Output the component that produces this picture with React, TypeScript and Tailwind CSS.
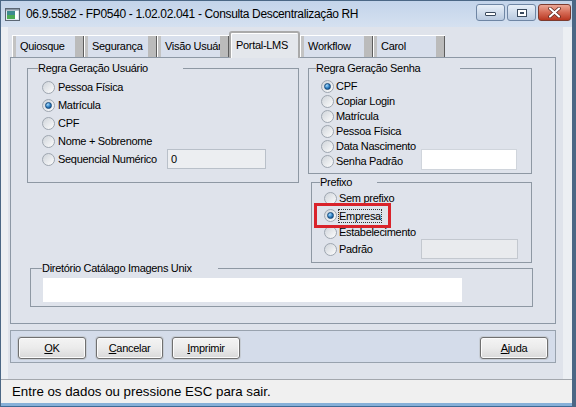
import React from 'react';

const Radio = ({ checked }: { checked?: boolean }) => (
  <span className="w-[13px] h-[13px] shrink-0 rounded-full border border-[#9ea6b0] bg-linear-to-br from-[#cfd4da] to-[#fdfdfd] flex items-center justify-center">
    {checked && (
      <span className="w-[7px] h-[7px] rounded-full border border-[#174a7c] bg-[radial-gradient(circle_at_35%_30%,#a8dcff,#2a7cc0_55%,#0c3d6e)]" />
    )}
  </span>
);

const Row = ({
  label,
  checked,
  h,
  gap,
  children,
}: {
  label: string;
  checked?: boolean;
  h: string;
  gap: string;
  children?: React.ReactNode;
}) => (
  <div className={`flex items-center ${h} ${gap}`}>
    <Radio checked={checked} />
    {children ?? <span>{label}</span>}
  </div>
);

const Tab = ({ label, w }: { label: string; w: string }) => (
  <div className={`${w} h-[22px] flex border-t border-white`}>
    <span className="w-[1px] bg-white" />
    <span className="w-[3px] bg-[#c3c3c3]" />
    <span className="flex-1 min-w-0 overflow-hidden whitespace-nowrap bg-[#d8dfec] pl-[4px] flex items-center">{label}</span>
    <span className="w-[8px] bg-[#bbbbbb]" />
    <span className="w-[1px] bg-[#5c5c5c]" />
  </div>
);

const Button = ({ mn, rest, w }: { mn: string; rest: string; w: string }) => (
  <button
    type="button"
    className={`${w} h-[22px] rounded-[3px] border border-[#707070] bg-linear-to-b from-[#f4f4f4] via-[#ebebeb] to-[#d9d9d9] shadow-[0_0_0_1px_#c6ccd4,inset_0_0_0_1px_#fbfbfb] flex items-center justify-center font-normal`}
  >
    <span>
      <span className="underline">{mn}</span>
      {rest}
    </span>
  </button>
);

export default function App() {
  return (
    <div className="w-[576px] h-[407px] flex flex-col overflow-hidden border-t border-l border-r-[4px] border-[#4b6785] bg-[#eceff3] font-['Liberation_Sans',Arial,sans-serif] text-[11px] tracking-[-0.3px] text-black">
      {/* title bar */}
      <div className="h-[26px] shrink-0 flex items-center bg-linear-to-b from-[#c3d4ea] to-[#d5e1f0] pl-[4px]">
        <svg width="15" height="13" viewBox="0 0 15 13" className="shrink-0">
          <rect x="0.5" y="0.5" width="14" height="12" fill="#dfe6ee" stroke="#5b6673" />
          <rect x="2" y="3" width="8" height="8" fill="#3d8a8f" />
          <rect x="2" y="7" width="8" height="4" fill="#4caa55" />
          <rect x="10" y="3" width="3" height="8" fill="#ffffff" />
          <rect x="1" y="1" width="13" height="1.5" fill="#8a97a6" />
        </svg>
        <span className="ml-[6px] text-[12px] tracking-[-0.35px] text-black">
          06.9.5582 - FP0540 - 1.02.02.041 - Consulta Descentralização RH
        </span>
        <div className="ml-auto mr-[1px] flex items-start self-start pt-[3px] gap-[2px]">
          <div className="w-[29px] h-[17px] rounded-[3px] border border-[#6f86a4] bg-linear-to-b from-[#e8eff8] to-[#b9cae0] flex items-end justify-center pb-[4px]">
            <span className="w-[11px] h-[4px] bg-white border border-[#3a4a5e] rounded-[1px]" />
          </div>
          <div className="w-[29px] h-[17px] rounded-[3px] border border-[#6f86a4] bg-linear-to-b from-[#e8eff8] to-[#b9cae0] flex items-center justify-center">
            <span className="w-[10px] h-[8px] border border-[#3a4a5e] bg-white flex items-center justify-center">
              <span className="w-[4px] h-[2px] border border-[#3a4a5e]" />
            </span>
          </div>
          <div className="w-[33px] h-[17px] rounded-[3px] border border-[#7c3b2f] bg-linear-to-b from-[#eaa796] via-[#d56a55] to-[#b9361f] flex items-center justify-center">
            <svg width="13" height="11" viewBox="0 0 13 11">
              <path d="M2 1.5 L11 9.5 M11 1.5 L2 9.5" stroke="#5a2016" strokeWidth="3.6" strokeLinecap="round" />
              <path d="M2 1.5 L11 9.5 M11 1.5 L2 9.5" stroke="#ffffff" strokeWidth="2.2" strokeLinecap="round" />
            </svg>
          </div>
        </div>
      </div>

      {/* client */}
      <div className="h-[352px] shrink-0 flex">
        <div className="w-[7px] bg-[#eceff3]" />
        <div className="w-[555px] bg-[#dfe3eb] flex flex-col">
          {/* tabs */}
          <div className="h-[30px] flex items-end pl-[4px]">
            <Tab label="Quiosque" w="w-[72px]" />
            <Tab label="Segurança" w="w-[73px]" />
            <Tab label="Visão Usuár" w="w-[72px]" />
            <div className="w-[71px] h-[27px] -mb-[1px] relative z-10 rounded-t-[3px] border-2 border-b-0 border-[#aaaaaa] bg-[#e4e7ec] shadow-[inset_1px_1px_0_#ffffff] pl-[5px] pt-[4px] whitespace-nowrap">
              Portal-LMS
            </div>
            <Tab label="Workflow" w="w-[73px]" />
            <Tab label="Carol" w="w-[72px]" />
          </div>

          {/* tab page */}
          <div className="ml-[2px] w-[546px] h-[267px] border border-[#8d98a5] bg-[#dfe3eb] flex flex-col">
            <div className="flex pl-[16px] pt-[4px]">
              <fieldset className="w-[272px] h-[121px] border border-[#8e98a3]">
                <legend className="ml-[10px] w-[145px] leading-[13px]">Regra Geração Usuário</legend>
                <div className="pl-[14px] pt-[3px] flex flex-col">
                  <Row label="Pessoa Física" h="h-[18px]" gap="gap-[3px]" />
                  <Row label="Matrícula" checked h="h-[18px]" gap="gap-[3px]" />
                  <Row label="CPF" h="h-[18px]" gap="gap-[3px]" />
                  <Row label="Nome + Sobrenome" h="h-[18px]" gap="gap-[3px]" />
                  <Row label="Sequencial Numérico" h="h-[18px]" gap="gap-[3px]">
                    <span className="w-[106px]">Sequencial Numérico</span>
                    <span className="w-[99px] h-[20px] shrink-0 border border-[#b9c0c9] bg-[#eceef1] pl-[3px] flex items-center">0</span>
                  </Row>
                </div>
              </fieldset>

              <div className="ml-[9px] flex flex-col">
                <fieldset className="w-[224px] h-[112px] border border-[#8e98a3]">
                  <legend className="ml-[7px] w-[144px] leading-[13px]">Regra Geração Senha</legend>
                  <div className="pl-[12px] pt-[4px] flex flex-col">
                    <Row label="CPF" checked h="h-[15px]" gap="gap-[2px]" />
                    <Row label="Copiar Login" h="h-[15px]" gap="gap-[2px]" />
                    <Row label="Matrícula" h="h-[15px]" gap="gap-[2px]" />
                    <Row label="Pessoa Física" h="h-[15px]" gap="gap-[2px]" />
                    <Row label="Data Nascimento" h="h-[15px]" gap="gap-[2px]" />
                    <Row label="Senha Padrão" h="h-[15px]" gap="gap-[2px]">
                      <span className="w-[83px]">Senha Padrão</span>
                      <span className="w-[96px] h-[21px] shrink-0 border border-[#d0d5dc] bg-white -mt-[4px]" />
                    </Row>
                  </div>
                </fieldset>

                <fieldset className="ml-[3px] mt-[2px] w-[221px] h-[87px] border border-[#8e98a3]">
                  <legend className="ml-[8px] w-[57px] leading-[13px]">Prefixo</legend>
                  <div className="pl-[12px] pt-[1px] flex flex-col">
                    <Row label="Sem prefixo" h="h-[17px]" gap="gap-[2px]" />
                    <Row label="Empresa" checked h="h-[17px]" gap="gap-[2px]">
                      <span className="relative outline outline-1 outline-dotted outline-[#333] leading-[12px]">
                        Empresa
                        <span className="absolute -left-[25px] -top-[7px] w-[77px] h-[25px] border-[3px] border-[#d9232b]" />
                      </span>
                    </Row>
                    <Row label="Estabelecimento" h="h-[17px]" gap="gap-[2px]" />
                    <Row label="Padrão" h="h-[17px]" gap="gap-[2px]">
                      <span className="w-[80px]">Padrão</span>
                      <span className="w-[97px] h-[20px] shrink-0 border border-[#c3c8cf] bg-[#e9ebee] -mt-[2px]" />
                    </Row>
                  </div>
                </fieldset>
              </div>
            </div>

            <fieldset className="ml-[19px] -mt-[1px] w-[503px] h-[45px] border border-[#8e98a3]">
              <legend className="ml-[11px] w-[176px] leading-[13px]">Diretório Catálago Imagens Unix</legend>
              <div className="ml-[12px] mt-[3px] w-[419px] h-[24px] bg-white" />
            </fieldset>
          </div>

          {/* buttons */}
          <div className="mt-[6px] ml-[2px] w-[546px] h-[33px] border border-[#98a2ae] bg-[#d4dcea] flex items-start pt-[6px] px-[7px]">
            <Button mn="O" rest="K" w="w-[68px]" />
            <div className="w-[10px]" />
            <Button mn="C" rest="ancelar" w="w-[67px]" />
            <div className="w-[9px]" />
            <Button mn="I" rest="mprimir" w="w-[68px]" />
            <div className="flex-1" />
            <Button mn="A" rest="juda" w="w-[68px]" />
          </div>
        </div>
        <div className="flex-1 bg-[#eceff3]" />
      </div>

      {/* status bar */}
      <div className="h-[24px] shrink-0 border-t border-[#a3a7ad] bg-[#f0f0f0] flex items-center pl-[11px] text-[13.3px] tracking-normal">
        Entre os dados ou pressione ESC para sair.
      </div>
      <div className="h-[4px] shrink-0 bg-[#87b0d8] border-b border-[#3d6a96]" />
    </div>
  );
}
